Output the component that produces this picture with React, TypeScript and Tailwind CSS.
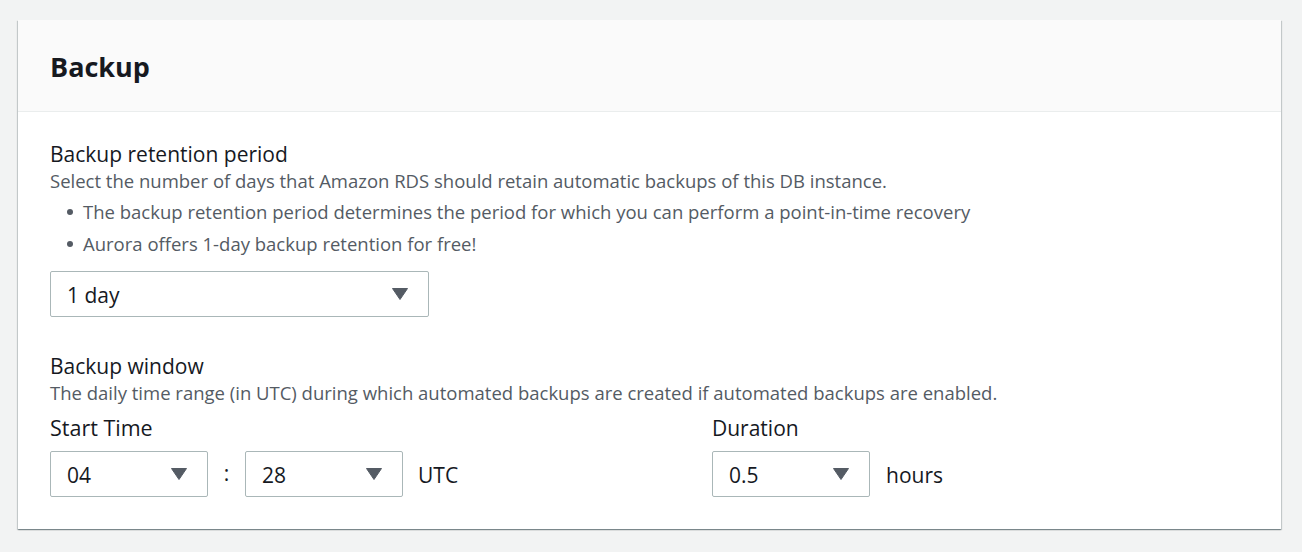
function Caret() {
  return (
    <svg width="16" height="12" viewBox="0 0 16 12" className="shrink-0">
      <path d="M0.5 0.5 L15.5 0.5 L8 11.5 Z" fill="#545b64" stroke="#545b64" strokeLinejoin="round" />
    </svg>
  );
}

function Select({ value, width }: { value: string; width: string }) {
  return (
    <div
      className={`${width} flex h-[46px] items-center justify-between rounded-[2px] border border-[#aab7b8] bg-white pl-[16px] pr-[20px] text-[21px] text-[#16191f]`}
    >
      <span className="pt-[3px]">{value}</span>
      <Caret />
    </div>
  );
}

export default function App() {
  return (
    <div className="min-h-[552px] bg-[#f2f3f3] px-[18px] pt-[20px] pb-[22px] font-['Open_Sans',sans-serif]">
      <div className="w-[1263px] bg-white shadow-[0_1px_1px_0_rgba(0,28,36,0.3),1px_1px_1px_0_rgba(0,28,36,0.15),-1px_1px_1px_0_rgba(0,28,36,0.15)]">
        <div className="flex h-[92px] items-center border-b border-[#eaeded] bg-[#fafafa] px-[32px] pt-[3px]">
          <h2 className="text-[27px] font-bold text-[#16191f]">Backup</h2>
        </div>
        <div className="px-[32px] pt-[28px] pb-[32px]">
          <div className="text-[21px] leading-[28px] text-[#16191f]">Backup retention period</div>
          <div className="text-[18.5px] leading-[26px] text-[#545b64]">
            Select the number of days that Amazon RDS should retain automatic backups of this DB instance.
          </div>
          <ul className="mt-[2px] text-[18.5px] leading-[32px] text-[#545b64]">
            <li className="flex items-center gap-[10px] pl-[17px]">
              <span className="h-[6px] w-[6px] rounded-full bg-[#545b64]" />
              The backup retention period determines the period for which you can perform a point-in-time recovery
            </li>
            <li className="flex items-center gap-[10px] pl-[17px]">
              <span className="h-[6px] w-[6px] rounded-full bg-[#545b64]" />
              Aurora offers 1-day backup retention for free!
            </li>
          </ul>
          <div className="mt-[11px]">
            <Select value="1 day" width="w-[379px]" />
          </div>

          <div className="mt-[35px] text-[21px] leading-[28px] text-[#16191f]">Backup window</div>
          <div className="text-[18.5px] leading-[26px] text-[#545b64]">
            The daily time range (in UTC) during which automated backups are created if automated backups are enabled.
          </div>
          <div className="mt-[6px] flex">
            <div className="w-[662px]">
              <div className="text-[21.5px] leading-[32px] text-[#16191f]">Start Time</div>
              <div className="mt-[7px] flex items-center">
                <Select value="04" width="w-[158px]" />
                <span className="w-[37px] text-center text-[21px] text-[#16191f]">:</span>
                <Select value="28" width="w-[158px]" />
                <span className="ml-[15px] pt-[3px] text-[21px] text-[#16191f]">UTC</span>
              </div>
            </div>
            <div>
              <div className="text-[21px] leading-[32px] text-[#16191f]">Duration</div>
              <div className="mt-[7px] flex items-center">
                <Select value="0.5" width="w-[158px]" />
                <span className="ml-[16px] pt-[3px] text-[21px] text-[#16191f]">hours</span>
              </div>
            </div>
          </div>
        </div>
      </div>
    </div>
  );
}
